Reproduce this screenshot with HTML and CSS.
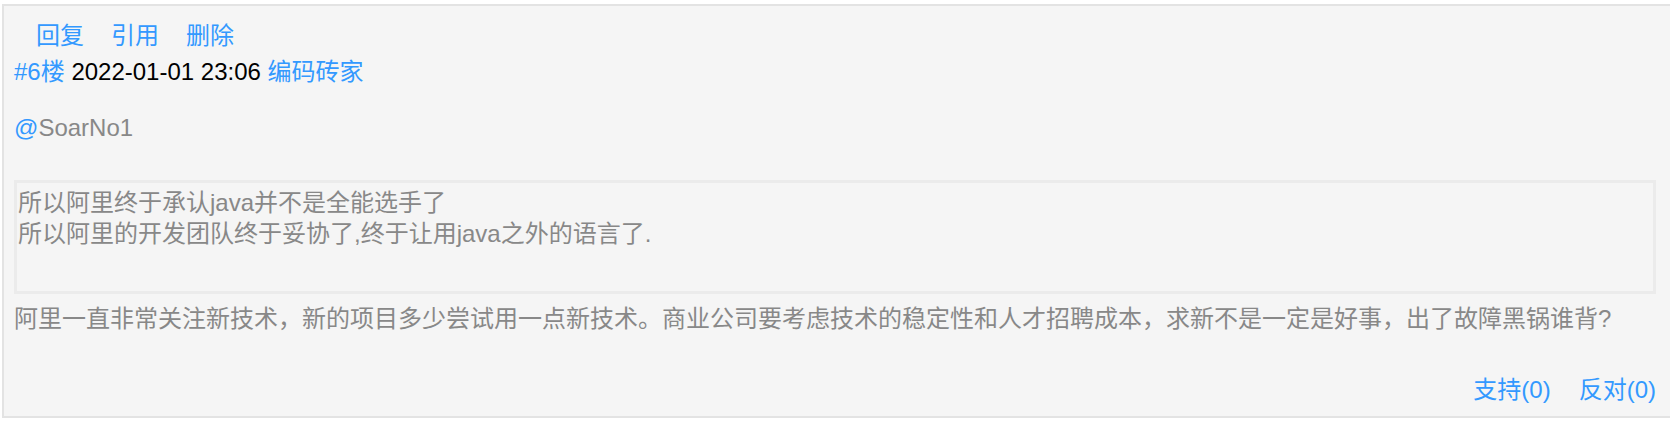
FILE: index.html
```html
<!DOCTYPE html>
<html lang="zh-CN">

<head>
    <meta charset="UTF-8">
    <meta name="viewport" content="width=device-width, initial-scale=1.0">
    <title>#6楼</title>
    <link rel="stylesheet" href="styles.css">
</head>

<body>
    <!-- One reply in the thread -->
    <div class="post">
        <div class="post-actions">
            <a href="#" class="link">回复</a>
            <a href="#" class="link">引用</a>
            <a href="#" class="link">删除</a>
        </div>
        <div class="post-head">
            <a href="#" class="link">#6楼</a>
            <span class="post-date">2022-01-01 23:06</span>
            <a href="#" class="link">编码砖家</a>
        </div>

        <div class="post-body">
            <p class="mention"><a href="#" class="link">@</a>SoarNo1</p>

            <!-- Quoted text -->
            <div class="quote">
                所以阿里终于承认java并不是全能选手了<br>
                所以阿里的开发团队终于妥协了,终于让用java之外的语言了.
            </div>

            <p class="reply-text">阿里一直非常关注新技术，新的项目多少尝试用一点新技术。商业公司要考虑技术的稳定性和人才招聘成本，求新不是一定是好事，出了故障黑锅谁背?</p>
        </div>

        <div class="post-votes">
            <a href="#" class="link">支持(0)</a>
            <a href="#" class="link">反对(0)</a>
        </div>
    </div>
</body>

</html>
```

FILE: styles.css
```css
body {
    margin: 0;
    background-color: #ffffff;
    font-family: "Liberation Sans", "Noto Sans CJK SC", sans-serif;
    font-size: 24px;
    color: #888888; /* Soft gray body text */
    overflow: hidden;
}

.link {
    color: #3399ff;
    text-decoration: none;
}

.post {
    margin: 4px -4px 0 2px;
    border: 2px solid #e3e3e3;
    background-color: #f5f5f5;
    padding: 12px 10px 8px 10px;
}

.post-actions {
    display: flex;
    gap: 27px;
    padding-left: 22px;
    line-height: 36px;
}

.post-head {
    line-height: 36px;
}

.post-date {
    color: #000000;
}

.mention {
    margin: 20px 0 0 0;
    line-height: 36px;
}

.quote {
    margin: 34px 6px 0 0;
    border: 3px solid #ebebeb;
    padding: 4px 0 42px 1px;
    line-height: 31px;
}

.reply-text {
    margin: 7px 0 0 0;
    line-height: 36px;
}

.post-votes {
    display: flex;
    justify-content: flex-end;
    gap: 28px;
    margin-top: 35px;
    padding-right: 6px;
    line-height: 36px;
}
```
